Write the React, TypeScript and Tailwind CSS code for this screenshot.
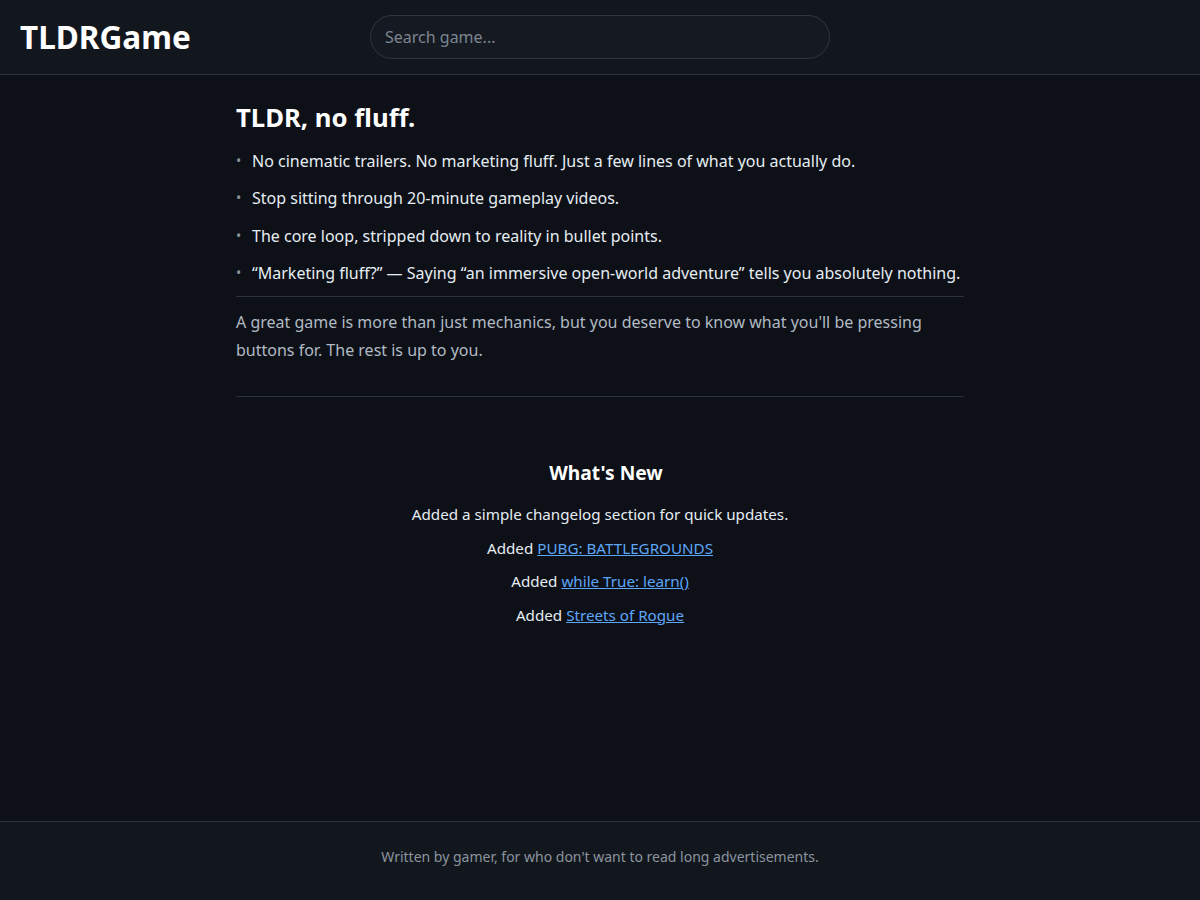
import React from "react";

const items = [
  "No cinematic trailers. No marketing fluff. Just a few lines of what you actually do.",
  "Stop sitting through 20-minute gameplay videos.",
  "The core loop, stripped down to reality in bullet points.",
  "\u201cMarketing fluff?\u201d \u2014 Saying \u201can immersive open-world adventure\u201d tells you absolutely nothing.",
];

export default function App() {
  return (
    <div
      className="min-h-screen flex flex-col bg-[#0d1017] text-[#e6edf3]"
      style={{ fontFamily: '"Noto Sans", "Open Sans", sans-serif' }}
    >
      <header className="h-[75px] flex items-center bg-[#12171e] border-b border-[#2d333b] px-5 relative">
        <div className="text-[31.5px] font-bold text-white leading-none">TLDRGame</div>
        <div className="absolute left-[370px] top-[15px] w-[460px] h-[44px]">
          <input
            className="w-full h-full rounded-full border border-[#30363d] bg-[#151a22] px-[14px] text-[16px] text-[#e6edf3] placeholder-[#7d8590] outline-none"
            placeholder="Search game..."
          />
        </div>
      </header>
      <main className="flex-1">
        <div className="w-[728px] mx-auto pt-[25px]">
          <h1 className="text-[25.7px] font-bold text-white leading-[36px]">TLDR, no fluff.</h1>
          <ul className="mt-[6px]">
            {items.map((t) => (
              <li key={t} className="flex items-center text-[16px] leading-[24px] py-[6.75px]">
                <span className="w-4 shrink-0 text-[#8b949e] text-[14px] leading-[24px]">•</span>
                <span>{t}</span>
              </li>
            ))}
          </ul>
          <div className="border-t border-[#2d333b] mt-[4px]" />
          <p className="mt-[11px] text-[16px] leading-[28px] text-[#b1bac4]">
            A great game is more than just mechanics, but you deserve to know what you'll be pressing buttons for. The rest is up to you.
          </p>
          <div className="border-t border-[#2d333b] mt-[32px]" />
          <section className="mt-[62px] text-center">
            <h2 className="text-[19.2px] font-bold text-white pl-[12px]">What's New</h2>
            <p className="mt-[14px] text-[15.2px] leading-[24px]">Added a simple changelog section for quick updates.</p>
            <p className="mt-[10px] text-[15.2px] leading-[24px]">
              Added <a href="#" className="text-[#5ea6f7] underline">PUBG: BATTLEGROUNDS</a>
            </p>
            <p className="mt-[9.5px] text-[15.2px] leading-[24px]">
              Added <a href="#" className="text-[#5ea6f7] underline">while True: learn()</a>
            </p>
            <p className="mt-[9.5px] text-[15.2px] leading-[24px]">
              Added <a href="#" className="text-[#5ea6f7] underline">Streets of Rogue</a>
            </p>
          </section>
        </div>
      </main>
      <footer className="h-[79px] bg-[#12171e] border-t border-[#2d333b] flex justify-center pt-[25px] text-[14px] leading-[20px] text-[#8b949e]">
        Written by gamer, for who don't want to read long advertisements.
      </footer>
    </div>
  );
}
